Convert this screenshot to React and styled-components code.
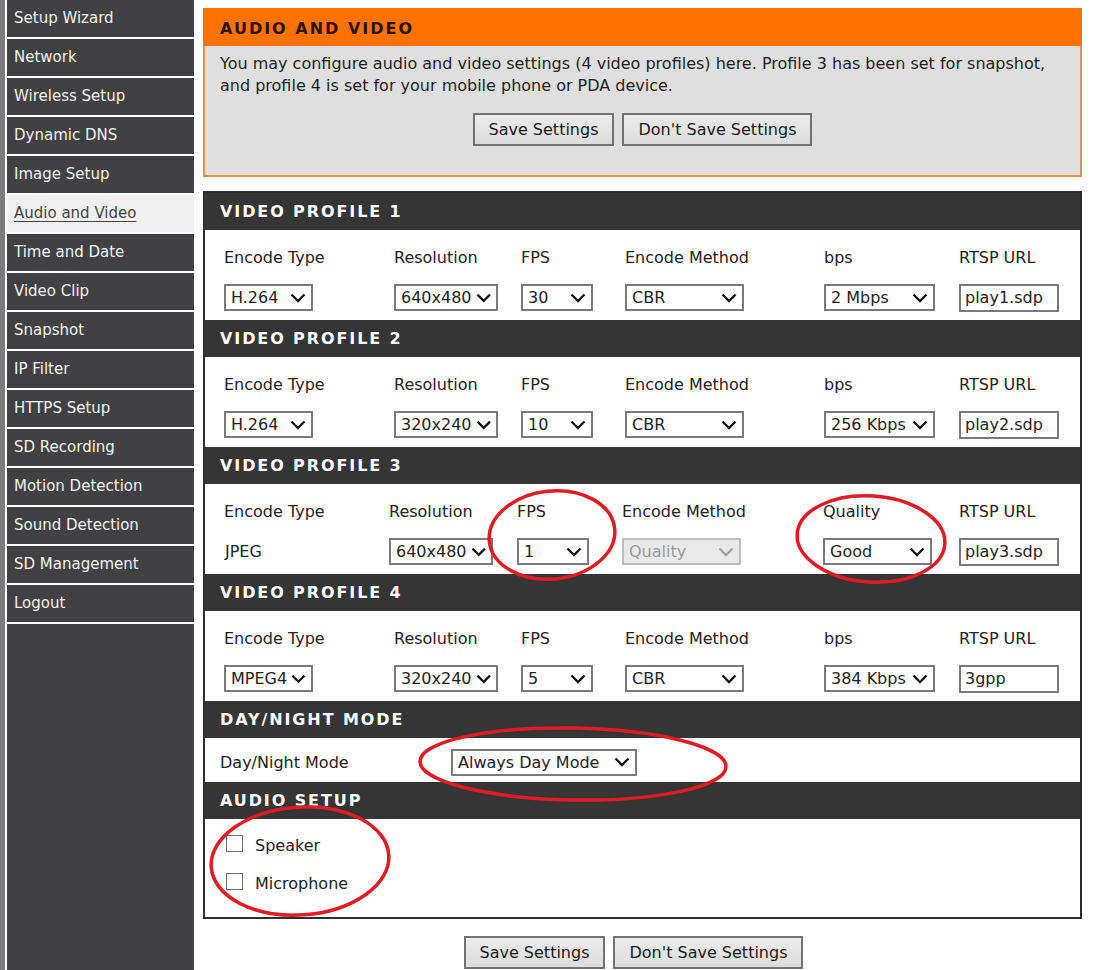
import styled, { createGlobalStyle } from 'styled-components';

const GlobalStyle = createGlobalStyle`
  html, body {
    margin: 0;
    padding: 0;
    background: #fff;
  }
  body {
    font-family: "DejaVu Sans", Verdana, sans-serif;
    color: #222;
  }
  * { box-sizing: border-box; }
`

const navItems = [
  'Setup Wizard', 'Network', 'Wireless Setup', 'Dynamic DNS', 'Image Setup',
  'Audio and Video', 'Time and Date', 'Video Clip', 'Snapshot', 'IP Filter',
  'HTTPS Setup', 'SD Recording', 'Motion Detection', 'Sound Detection',
  'SD Management', 'Logout',
];

const standardCols = '170px 127px 104px 199px 135px 1fr';
const shiftedCols = '165px 128px 105px 201px 136px 1fr';

const profiles = [
  {
    title: 'VIDEO PROFILE 1',
    cols: standardCols,
    fields: [
      { label: 'Encode Type', kind: 'select', value: 'H.264', width: 89 },
      { label: 'Resolution', kind: 'select', value: '640x480', width: 104 },
      { label: 'FPS', kind: 'select', value: '30', width: 72 },
      { label: 'Encode Method', kind: 'select', value: 'CBR', width: 119 },
      { label: 'bps', kind: 'select', value: '2 Mbps', width: 111 },
      { label: 'RTSP URL', kind: 'input', value: 'play1.sdp', width: 100 },
    ],
  },
  {
    title: 'VIDEO PROFILE 2',
    cols: standardCols,
    fields: [
      { label: 'Encode Type', kind: 'select', value: 'H.264', width: 89 },
      { label: 'Resolution', kind: 'select', value: '320x240', width: 104 },
      { label: 'FPS', kind: 'select', value: '10', width: 72 },
      { label: 'Encode Method', kind: 'select', value: 'CBR', width: 119 },
      { label: 'bps', kind: 'select', value: '256 Kbps', width: 111 },
      { label: 'RTSP URL', kind: 'input', value: 'play2.sdp', width: 100 },
    ],
  },
  {
    title: 'VIDEO PROFILE 3',
    cols: shiftedCols,
    fields: [
      { label: 'Encode Type', kind: 'text', value: 'JPEG' },
      { label: 'Resolution', kind: 'select', value: '640x480', width: 104 },
      { label: 'FPS', kind: 'select', value: '1', width: 72 },
      { label: 'Encode Method', kind: 'select', value: 'Quality', width: 119, disabled: true },
      { label: 'Quality', kind: 'select', value: 'Good', width: 109 },
      { label: 'RTSP URL', kind: 'input', value: 'play3.sdp', width: 100 },
    ],
  },
  {
    title: 'VIDEO PROFILE 4',
    cols: standardCols,
    fields: [
      { label: 'Encode Type', kind: 'select', value: 'MPEG4', width: 89 },
      { label: 'Resolution', kind: 'select', value: '320x240', width: 104 },
      { label: 'FPS', kind: 'select', value: '5', width: 72 },
      { label: 'Encode Method', kind: 'select', value: 'CBR', width: 119 },
      { label: 'bps', kind: 'select', value: '384 Kbps', width: 111 },
      { label: 'RTSP URL', kind: 'input', value: '3gpp', width: 100 },
    ],
  },
];

function Chevron({ disabled }) {
  return (
    <svg width="16" height="10" viewBox="0 0 16 10">
      <polyline
        points="1.5,1.5 8,8 14.5,1.5"
        fill="none"
        stroke={disabled ? '#a0a0a0' : '#111'}
        strokeWidth="2.3"
      />
    </svg>
  );
}

function Select({ value, width, disabled }) {
  return (
    <SelectBox $width={width} $disabled={disabled}>
      <span>{value}</span>
      <Chevron disabled={disabled} />
    </SelectBox>
  );
}

function Field({ field }) {
  if (field.kind === 'text') return <PlainValue>{field.value}</PlainValue>;
  if (field.kind === 'input') return <TextInput $width={field.width}>{field.value}</TextInput>;
  return <Select value={field.value} width={field.width} disabled={field.disabled} />;
}

function App() {
  return (
    <>
      <GlobalStyle />
      <Page>
        <Sidebar>
          <Menu>
            {navItems.map((item) => (
              <MenuItem key={item} $active={item === 'Audio and Video'}>{item}</MenuItem>
            ))}
          </Menu>
        </Sidebar>

        <Main>
          <IntroPanel>
            <IntroTitle>AUDIO AND VIDEO</IntroTitle>
            <IntroBody>
              <p>
                You may configure audio and video settings (4 video profiles) here. Profile 3 has been set for snapshot,
                <br />
                and profile 4 is set for your mobile phone or PDA device.
              </p>
              <ButtonRow>
                <Button>Save Settings</Button>
                <Button>Don't Save Settings</Button>
              </ButtonRow>
            </IntroBody>
          </IntroPanel>

          <SettingsBox>
            {profiles.map((profile) => (
              <div key={profile.title}>
                <SectionHeader>{profile.title}</SectionHeader>
                <ProfileGrid $cols={profile.cols}>
                  {profile.fields.map((f) => (
                    <FieldLabel key={'l' + f.label}>{f.label}</FieldLabel>
                  ))}
                  {profile.fields.map((f) => (
                    <FieldCell key={'v' + f.label}><Field field={f} /></FieldCell>
                  ))}
                </ProfileGrid>
              </div>
            ))}

            <SectionHeader>DAY/NIGHT MODE</SectionHeader>
            <ModeRow>
              <span>Day/Night Mode</span>
              <Select value="Always Day Mode" width={186} />
            </ModeRow>

            <SectionHeader>AUDIO SETUP</SectionHeader>
            <AudioBody>
              <CheckRow><CheckBox />Speaker</CheckRow>
              <CheckRow><CheckBox />Microphone</CheckRow>
            </AudioBody>
          </SettingsBox>

          <FooterButtons>
            <Button>Save Settings</Button>
            <Button>Don't Save Settings</Button>
          </FooterButtons>
        </Main>

        <Annotations width="1093" height="970" viewBox="0 0 1093 970">
          <ellipse cx="552" cy="535" rx="63" ry="44" transform="rotate(-6 552 535)" />
          <ellipse cx="871" cy="539" rx="74" ry="43" transform="rotate(4 871 539)" />
          <ellipse cx="573" cy="764" rx="153" ry="36" transform="rotate(1 573 764)" />
          <ellipse cx="300" cy="861" rx="89" ry="54" transform="rotate(-4 300 861)" />
        </Annotations>
      </Page>
    </>
  );
}

export default App;

const Page = styled.div`
  position: relative;
  display: flex;
  width: 1093px;
  min-height: 970px;
`
const Sidebar = styled.div`
  width: 194px;
  flex-shrink: 0;
  border-left: 5px solid #7b7b7d;
  padding-left: 2px;
  background: #fff;
  display: flex;
`
const Menu = styled.div`
  width: 100%;
  background: #414143;
`
const MenuItem = styled.div`
  height: 39px;
  padding: 0 0 2px 7px;
  border-bottom: 2px solid #fff;
  display: flex;
  align-items: center;
  font-size: 15px;
  color: ${({ $active }) => ($active ? '#444' : '#f2f2f2')};
  background: ${({ $active }) => ($active ? '#f0f0f0' : '#414143')};
  text-decoration: ${({ $active }) => ($active ? 'underline' : 'none')};
  text-underline-offset: 3px;
`
const Main = styled.div`
  width: 879px;
  margin: 8px 0 0 9px;
  display: flex;
  flex-direction: column;
`
const IntroPanel = styled.div`
  border: 2px solid #e3914a;
  background: #dfdfdf;
`
const IntroTitle = styled.div`
  height: 38px;
  margin: -2px -2px 0;
  padding: 2px 0 0 17px;
  background: #ff7200;
  display: flex;
  align-items: center;
  font-weight: bold;
  font-size: 16px;
  letter-spacing: 2px;
  color: #2a1505;
`
const IntroBody = styled.div`
  padding: 7px 15px 29px;
  font-size: 16px;
  line-height: 22px;
  color: #1e1e1e;
  p { margin: 0; }
`
const ButtonRow = styled.div`
  display: flex;
  justify-content: center;
  gap: 8px;
  margin-top: 16px;
`
const Button = styled.button`
  height: 33px;
  padding: 0 14px;
  font-family: inherit;
  font-size: 16px;
  color: #1a1a1a;
  background: linear-gradient(#ececec, #dcdcdc);
  border: 2px solid #737373;
  border-radius: 0;
`
const SettingsBox = styled.div`
  margin-top: 14px;
  border: 2px solid #2e2e2e;
  background: #fff;
`
const SectionHeader = styled.div`
  height: 37px;
  padding-left: 15px;
  background: #353535;
  display: flex;
  align-items: center;
  font-weight: bold;
  font-size: 16px;
  letter-spacing: 1.9px;
  color: #fff;
`
const ProfileGrid = styled.div`
  display: grid;
  grid-template-columns: ${({ $cols }) => $cols};
  grid-template-rows: 20px 27px;
  row-gap: 16px;
  padding: 18px 0 7px 19px;
  height: 90px;
`
const FieldLabel = styled.div`
  font-size: 16px;
  line-height: 20px;
  white-space: nowrap;
`
const FieldCell = styled.div`
  display: flex;
  align-items: center;
`
const SelectBox = styled.div`
  width: ${({ $width }) => $width}px;
  height: 27px;
  padding: 0 5px 0 5px;
  display: flex;
  align-items: center;
  justify-content: space-between;
  gap: 4px;
  font-size: 16px;
  white-space: nowrap;
  border: 2px solid ${({ $disabled }) => ($disabled ? '#bdbdbd' : '#7a7a7a')};
  background: ${({ $disabled }) => ($disabled ? '#e9e9e9' : '#fff')};
  color: ${({ $disabled }) => ($disabled ? '#9a9a9a' : '#1e1e1e')};
`
const TextInput = styled.div`
  width: ${({ $width }) => $width}px;
  height: 28px;
  padding: 0 4px;
  display: flex;
  align-items: center;
  font-size: 16px;
  border: 2px solid #7a7a7a;
  background: #fff;
`
const PlainValue = styled.span`
  font-size: 16px;
  padding-left: 1px;
`
const ModeRow = styled.div`
  height: 44px;
  padding: 4px 0 0 15px;
  display: grid;
  grid-template-columns: 231px auto;
  align-items: center;
  justify-content: start;
  font-size: 16px;
`
const AudioBody = styled.div`
  height: 98px;
  padding: 16px 0 0 21px;
  display: flex;
  flex-direction: column;
  gap: 18px;
`
const CheckRow = styled.label`
  display: flex;
  align-items: center;
  gap: 12px;
  height: 20px;
  font-size: 16px;
`
const CheckBox = styled.span`
  width: 17px;
  height: 17px;
  margin-top: -4px;
  border: 1.5px solid #6d6d6d;
  background: #fff;
`
const FooterButtons = styled.div`
  display: flex;
  justify-content: center;
  gap: 8px;
  margin-top: 17px;
  padding-right: 18px;
`
const Annotations = styled.svg`
  position: absolute;
  top: 0;
  left: 0;
  pointer-events: none;
  ellipse {
    fill: none;
    stroke: #e11b22;
    stroke-width: 3.5;
  }
`
